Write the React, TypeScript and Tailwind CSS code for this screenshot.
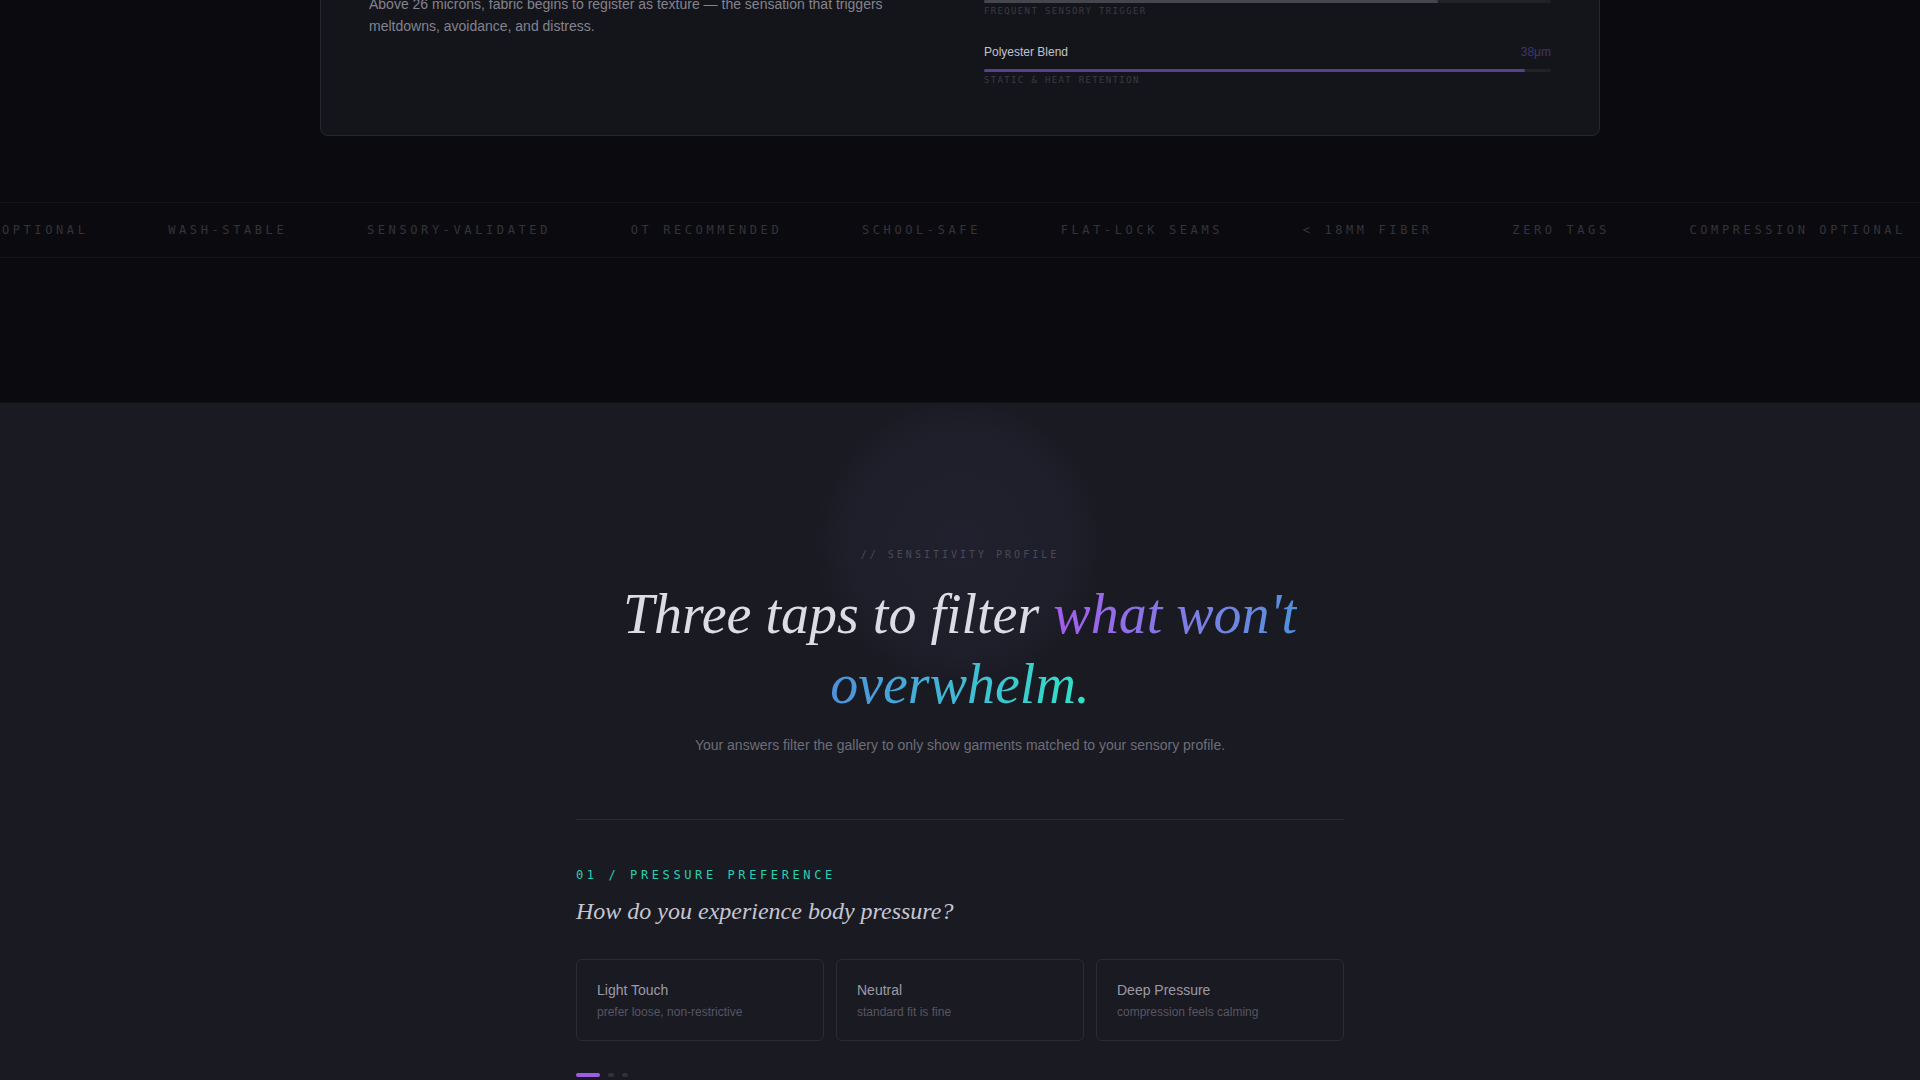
import React from 'react';

type Fiber = {
  name: string;
  value: string;
  fill: number;
  note: string;
  bar: string;
  valueColor: string;
};

const fibers: Fiber[] = [
  {
    name: 'Standard Wool',
    value: '32μm',
    fill: 80,
    note: 'Frequent sensory trigger',
    bar: 'bg-[#46464e]',
    valueColor: 'text-[#5a5a64]',
  },
  {
    name: 'Polyester Blend',
    value: '38μm',
    fill: 95.5,
    note: 'Static & heat retention',
    bar: 'bg-[#5a3f92]',
    valueColor: 'text-[#41356c]',
  },
];

const badges = [
  'Wash-stable',
  'Sensory-validated',
  'OT recommended',
  'School-safe',
  'Flat-lock seams',
  '< 18mm fiber',
  'Zero tags',
  'Compression optional',
];

const pressureOptions = [
  { title: 'Light Touch', hint: 'prefer loose, non-restrictive' },
  { title: 'Neutral', hint: 'standard fit is fine' },
  { title: 'Deep Pressure', hint: 'compression feels calming' },
];

const FiberRow: React.FC<{ fiber: Fiber }> = ({ fiber }) => (
  <div>
    <div className="flex h-5 items-center justify-between text-[12px]">
      <span className="text-[#c3c3cb]">{fiber.name}</span>
      <span className={fiber.valueColor}>{fiber.value}</span>
    </div>
    <div className="mt-[7px] h-[3px] rounded-full bg-[#212128]">
      <div className={`h-full rounded-full ${fiber.bar}`} style={{ width: `${fiber.fill}%` }} />
    </div>
    <div className="mt-[2px] font-['DejaVu_Sans_Mono',monospace] text-[9px] uppercase leading-[13px] tracking-[0.15em] text-[#3a3a43]">
      {fiber.note}
    </div>
  </div>
);

const Marquee: React.FC = () => {
  const track = [badges[badges.length - 1], ...badges, ...badges];
  return (
    <div className="mt-[66px] flex h-14 items-center overflow-hidden border-y border-[#131318]">
      <div className="-ml-[128px] flex shrink-0 items-center gap-[79.7px] whitespace-nowrap">
        {track.map((label, i) => (
          <span
            key={i}
            className="font-['DejaVu_Sans_Mono',monospace] text-[12px] uppercase tracking-[0.3em] text-[#33333b]"
          >
            {label}
          </span>
        ))}
      </div>
    </div>
  );
};

export default function App() {
  return (
    <div className="min-h-screen bg-[#1a1a23] font-['Liberation_Sans',Arial,sans-serif]">
      <div className="overflow-hidden bg-[#0b0b0f] pb-36">
        <div className="mx-auto -mt-[76px] max-w-[1280px] rounded-lg border border-[#26262e] bg-[#14151b] p-12">
          <div className="grid grid-cols-2 gap-12">
            <div className="pt-5">
              <p className="text-[14px] leading-[22px] text-[#83838d]">
                Above 26 microns, fabric begins to register as texture — the sensation that triggers
                meltdowns, avoidance, and distress.
              </p>
            </div>
            <div className="space-y-6">
              {fibers.map((f) => (
                <FiberRow key={f.name} fiber={f} />
              ))}
            </div>
          </div>
        </div>
        <Marquee />
      </div>

      <section className="relative overflow-hidden border-t border-[#101016] pb-32 pt-36">
        <div className="pointer-events-none absolute left-1/2 top-[-6px] h-[290px] w-[290px] -translate-x-1/2 rounded-full bg-[radial-gradient(circle,rgba(110,100,170,0.08)_0%,rgba(110,100,170,0.05)_55%,transparent_72%)]" />

        <div className="relative mx-auto max-w-3xl">
          <div className="text-center">
            <p className="font-['DejaVu_Sans_Mono',monospace] text-[10px] uppercase leading-4 tracking-[0.3em] text-[#4a4a55]">
              // Sensitivity profile
            </p>
            <h2 className="mt-4 font-['Liberation_Serif',serif] text-[56px] font-normal italic leading-[1.25] text-[#dcdce4]">
              Three taps to filter{' '}
              <span className="bg-linear-to-r from-[#a35bec] via-[#4b93db] to-[#2fe3c6] bg-clip-text text-transparent">
                what won't overwhelm.
              </span>
            </h2>
            <p className="mt-3.5 text-[14px] leading-6 text-[#6d6d78]">
              Your answers filter the gallery to only show garments matched to your sensory profile.
            </p>
          </div>

          <div className="mt-[62px] border-t border-[#292932] pt-[47px]">
            <p className="font-['DejaVu_Sans_Mono',monospace] text-[12px] uppercase leading-4 tracking-[0.3em] text-[#2bcfb3]">
              01 / Pressure preference
            </p>
            <h3 className="mt-3 font-['Liberation_Serif',serif] text-[24px] font-normal italic leading-8 text-[#c6c6d0]">
              How do you experience body pressure?
            </h3>

            <div className="mt-8 grid grid-cols-3 gap-3">
              {pressureOptions.map((opt) => (
                <button
                  key={opt.title}
                  className="rounded-md border border-[#2b2b35] px-5 py-5 text-left"
                >
                  <div className="text-[14px] leading-5 text-[#9b9ba6]">{opt.title}</div>
                  <div className="mt-1 text-[12px] leading-4 text-[#565661]">{opt.hint}</div>
                </button>
              ))}
            </div>

            <div className="mt-8 flex items-center gap-2">
              <span className="h-1 w-6 rounded-full bg-[#9d5ce6]" />
              <span className="h-1 w-1.5 rounded-full bg-[#31313b]" />
              <span className="h-1 w-1.5 rounded-full bg-[#31313b]" />
            </div>
          </div>
        </div>
      </section>
    </div>
  );
}
